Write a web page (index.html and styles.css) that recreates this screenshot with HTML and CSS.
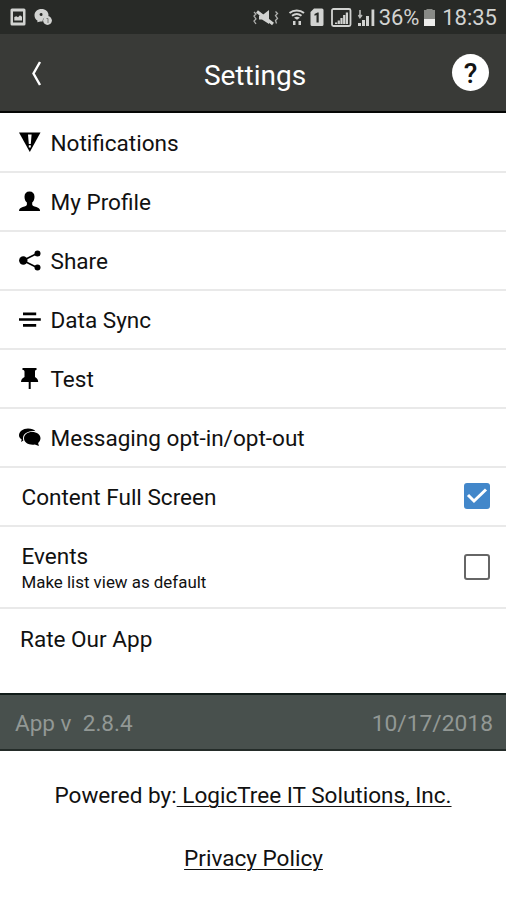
FILE: index.html
```html
<!DOCTYPE html>
<html lang="en">
<head>
<meta charset="utf-8">
<title>Settings</title>
<link rel="stylesheet" href="styles.css">
</head>
<body>
<div class="statusbar">
  <svg class="status-left" width="44" height="20" viewBox="0 0 44 20" fill="#d2d3d1">
    <path fill-rule="evenodd" d="M2 .500h12a1.500 1.500 0 0 1 1.500 1.500v14a1.500 1.500 0 0 1-1.500 1.500H2a1.500 1.500 0 0 1-1.500-1.500v-14A1.500 1.500 0 0 1 2 .5zM3 3.500v11h10v-11z"/>
    <path d="M4.300 12.500V9l2-.8 1.700 1 2-2 2 1.600v3.700z"/>
    <path fill-rule="evenodd" d="M31.500 1c4 0 7 2.600 7 6 0 1-.2 1.600-.6 2.300-2.900-.4-5.400 1.200-5.400 4.200h-2l-3.300.8.4-1.600c-2-1-3.100-3-3.100-5.400 0-3.600 3-6.300 7-6.300zM31 5a1.500 1.500 0 1 0 .1 3A1.500 1.500 0 0 0 31 5z"/>
    <circle cx="37.500" cy="12.500" r="4.400"/>
    <path d="M36.500 10.500H38V15" fill="none" stroke="#777974"/>
  </svg>
  <div class="status-right">
    <svg width="126" height="20" viewBox="0 0 126 20" fill="#d2d3d1">
      <path d="M6 7.500h3l7-5.500v14l-7-4.500H6z"/>
      <path d="M4 3.500l16 12.500" stroke="#d2d3d1" stroke-width="3"/>
      <path d="M1 4l2 2-2 2 2 3-2 2 2 3M22.500 3.500l2 2-2 2 2 3-2 2 1 3" fill="none" stroke="#b0b1af" stroke-width="1.300"/>
      <path d="M36.500 5c4-3.400 10.500-3.400 14.500 0M39 7.800c3-2.200 6.500-2.200 9.500 0" fill="none" stroke="#d2d3d1" stroke-width="2"/>
      <path d="M41 9.700c2-1.300 4-1.300 6 0l-3 2zM40 13h2.500v4H40zM45.500 13H48v4h-2.500z"/>
      <path fill-rule="evenodd" d="M61 .500h8a1.500 1.500 0 0 1 1.500 1.500v14.500A1.500 1.500 0 0 1 69 18H59a1.500 1.500 0 0 1-1.500-1.500V4zM64.500 4.500L61.500 6v1.700l2-.7v7.500h2.200v-10z"/>
      <rect x="79" y="1" width="18.500" height="17" rx="1.500" fill="none" stroke="#d2d3d1" stroke-width="1.800"/>
      <path d="M82 14.500h2.200V16H82zM84.700 12.500h2.200V16h-2.200zM87.400 10h2.200v6h-2.200zM90.100 7h2.200v9h-2.200zM92.800 4.500H95V16h-2.200zM105 15h3v3h-3zM109 12h3v6h-3zM113 8h3v10h-3zM118.500 1.500h2.800V18h-2.800z"/>
      <path d="M107 2v7M105.500 7l1.500 2.500L109 7" fill="none" stroke="#b8b9b7" stroke-width="1.600"/>
    </svg>
    <span class="percent">36%</span>
    <svg class="battery" width="13" height="18" viewBox="0 0 13 18"><path d="M3.500 0h6v1H12v9.500H1V1h2.500z" fill="#888a86"/><path d="M1 10h11v7H1z" fill="#ededeb"/></svg>
    <span class="clock">18:35</span>
  </div>
</div>
<header class="header">
  <svg class="back" width="14" height="28" viewBox="0 0 14 28"><path d="M10 2L3.500 13.500 10 25" fill="none" stroke="#fff" stroke-width="2.400"/></svg>
  <h1 class="title">Settings</h1>
  <span class="help">?</span>
</header>
<main class="list">
  <div class="row"><svg class="icon" viewBox="0 0 22 22"><path d="M0 .5h21.500L10.800 20z"/><path d="M9 2.500h3.600l-.8 9.500H9.800zM9.800 13.300h2v2.200h-2z" fill="#fff"/></svg><span>Notifications</span></div>
  <div class="row"><svg class="icon" viewBox="0 0 22 22"><path d="M10.500.500c3.200 0 5 2 5 5.200 0 2.500-.9 4.600-2.300 5.900v2c0 1.400 1.500 1.600 4.200 2.500 2.400.8 3.600 1.800 3.700 3.900H0c.1-2.100 1.300-3.100 3.700-3.900 2.700-.9 4.200-1.100 4.200-2.500v-2C6.400 10.300 5.500 8.200 5.500 5.700c0-3.200 1.800-5.200 5-5.200z"/></svg><span>My Profile</span></div>
  <div class="row"><svg class="icon" viewBox="0 0 22 22"><path d="M18 3.500L4 10.500l14 7" fill="none" stroke="#000" stroke-width="1.700"/><circle cx="4.300" cy="10.500" r="4.200"/><circle cx="18.500" cy="3.500" r="3"/><circle cx="18.500" cy="17.500" r="3"/></svg><span>Share</span></div>
  <div class="row"><svg class="icon" viewBox="0 0 22 22"><path d="M4 3.500h13.200v2.700H4zM0 9.300h21.800v2.500H0zM4 15h13.200v2.700H4z"/></svg><span>Data Sync</span></div>
  <div class="row"><svg class="icon" viewBox="0 0 22 22"><path d="M3.500 0h14v2c-1.300 0-1.500.5-1.500 1.700V9c2 1.200 3.200 2.800 3.200 5h-7.500v7H9.700v-7H2c0-2.200 1.300-3.800 3.500-5V3.700C5.500 2.500 5 2 3.500 2z"/></svg><span>Test</span></div>
  <div class="row"><svg class="icon" viewBox="0 0 22 22"><path d="M9 1.500c3.500 0 6 .8 7.500 2.700C9.500 3.500 4 6.500 4 11.500c0 .8.100 1.400.4 2L2 15l.7-2.500C.8 11.300 0 10 0 8.500c0-4 4-7 9-7z"/><path d="M13 5c5 0 8.500 2.700 8.500 6.300 0 1.900-.9 3.500-2.400 4.600l.8 3-4.100-1.300c-5.500.9-10.800-1.600-10.800-6.300C5 7.700 8.500 5 13 5z"/></svg><span>Messaging opt-in/opt-out</span></div>
  <div class="row setting"><span>Content Full Screen</span><span class="box checked"><svg width="26" height="26" viewBox="0 0 26 26"><path d="M4 12l6 6L22 6.500" fill="none" stroke="#fff" stroke-width="3"/></svg></span></div>
  <div class="row setting events"><div class="stack"><span class="name">Events</span><small class="hint">Make list view as default</small></div><span class="box"></span></div>
  <div class="row setting rate"><span>Rate Our App</span></div>
</main>
<div class="version"><span>App v&nbsp; 2.8.4</span><span class="date">10/17/2018</span></div>
<footer class="footer">
  <p class="powered">Powered by:<a class="link">&nbsp;LogicTree IT Solutions, Inc.</a></p>
  <p class="privacy"><a class="link">Privacy Policy</a></p>
</footer>
</body>
</html>
```
FILE: styles.css
```css
* { box-sizing: border-box; }
body { margin: 0; width: 506px; height: 900px; overflow: hidden; background: #fff; color: #111; font: 22.56px/28px Roboto, sans-serif; }
span { white-space: nowrap; }
.statusbar { height: 34px; background: #282a27; display: flex; justify-content: space-between; align-items: center; padding: 0 9px 0 10px; color: #d2d3d1; font-size: 22px; }
.status-left { margin-top: 2px; }
.status-right { display: flex; align-items: center; padding-top: 2px; }
.percent { letter-spacing: -.1px; }
.battery { margin: 0 6px 0 4px; }
.header { height: 79px; background: #393a37; border-bottom: 2px solid #050605; display: grid; grid-template-columns: 60px 1fr 60px; align-items: center; color: #fff; }
.back { margin: 2px 0 0 30px; }
.title { margin: 6px 0 0 4px; text-align: center; font-size: 28px; line-height: 32px; font-weight: 400; }
.help { width: 37px; height: 37px; border-radius: 50%; background: #fff; color: #151515; font-size: 28px; line-height: 39px; font-weight: 500; text-align: center; margin-left: 6px; }
.list { padding-top: 1px; }
.row { height: 59px; border-bottom: 2px solid #e9e9e9; display: flex; align-items: center; padding: 3px 16px 0 19px; }
.icon { width: 22px; height: 22px; margin-right: 9.500px; flex: none; margin-top: -3px; }
.setting { justify-content: space-between; padding-left: 21.500px; }
.box { width: 26px; height: 26px; border: 2px solid #666; border-radius: 3px; margin-top: -4px; }
.checked { border: 0; background: #4287ca; }
.checked svg { display: block; }
.events { height: 82px; }
.stack { display: flex; flex-direction: column; }
.name { line-height: 27px; }
.hint { font-size: 16.900px; line-height: 25px; }
.rate { height: 84px; border: 0; padding: 0 0 23px 20px; }
.version { height: 58px; background: #48504d; border-top: 2px solid #111c19; border-bottom: 2px solid #242c29; color: #929895; display: flex; justify-content: space-between; align-items: center; padding: 3px 13px 0 15px; }
.date { font-size: 22.800px; }
.footer { text-align: center; padding-top: 31px; }
.powered, .privacy { margin: 0 0 35px; white-space: nowrap; }
.link { text-decoration: underline; text-decoration-thickness: 1px; text-underline-offset: 3px; }
.privacy { padding-left: 1px; }
```
